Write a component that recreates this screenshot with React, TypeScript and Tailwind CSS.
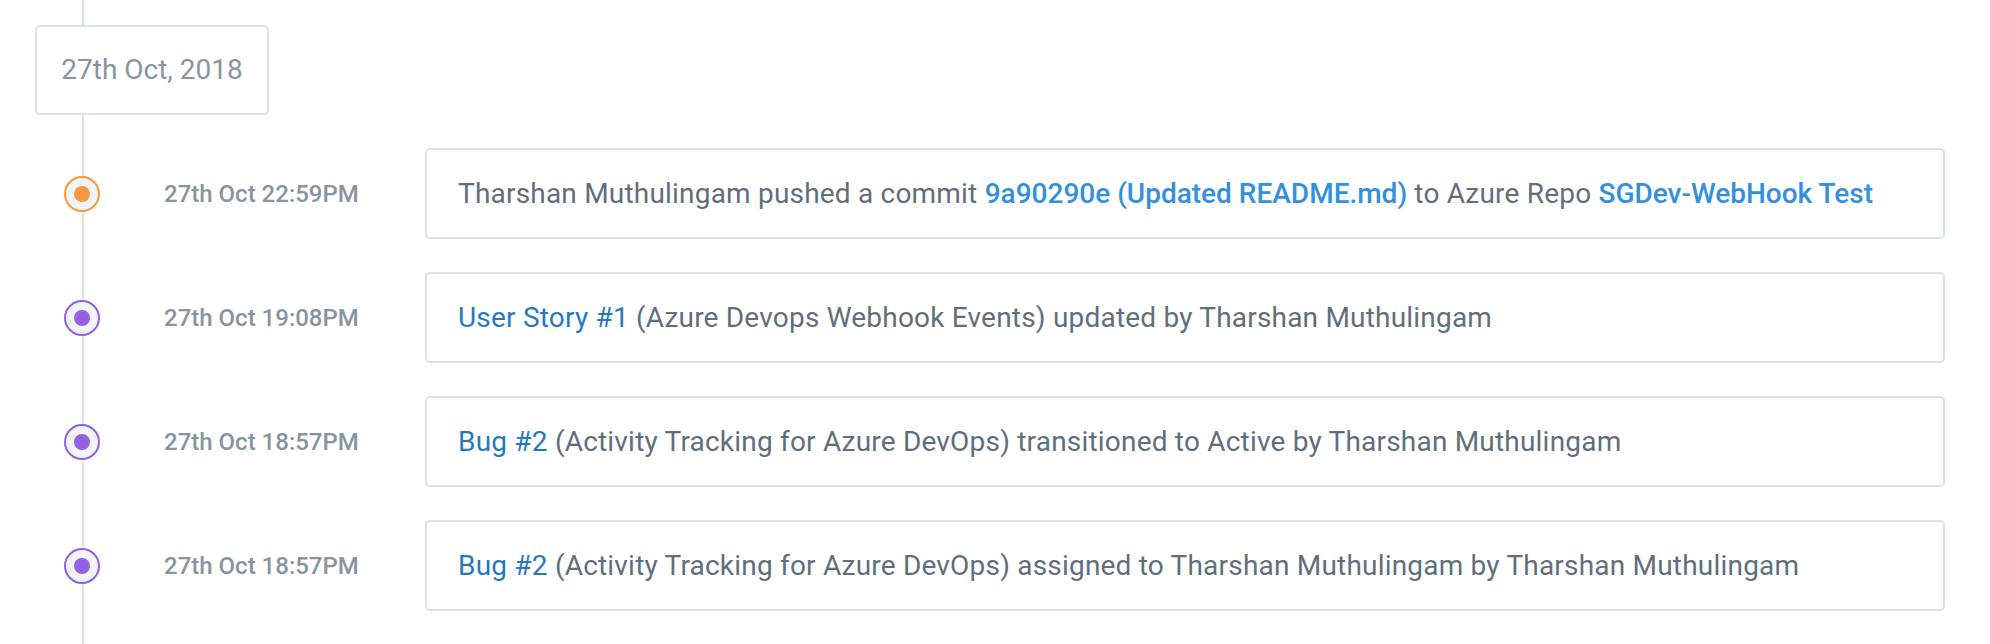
import React from "react";

type Part = { text: string; kind?: "link" | "strong" };

type Activity = {
  time: string;
  color: "orange" | "purple";
  parts: Part[];
};

const activities: Activity[] = [
  {
    time: "27th Oct 22:59PM",
    color: "orange",
    parts: [
      { text: "Tharshan Muthulingam pushed a commit " },
      { text: "9a90290e (Updated README.md)", kind: "strong" },
      { text: " to Azure Repo " },
      { text: "SGDev-WebHook Test", kind: "strong" },
    ],
  },
  {
    time: "27th Oct 19:08PM",
    color: "purple",
    parts: [
      { text: "User Story #1", kind: "link" },
      { text: " (Azure Devops Webhook Events) updated by Tharshan Muthulingam" },
    ],
  },
  {
    time: "27th Oct 18:57PM",
    color: "purple",
    parts: [
      { text: "Bug #2", kind: "link" },
      { text: " (Activity Tracking for Azure DevOps) transitioned to Active by Tharshan Muthulingam" },
    ],
  },
  {
    time: "27th Oct 18:57PM",
    color: "purple",
    parts: [
      { text: "Bug #2", kind: "link" },
      { text: " (Activity Tracking for Azure DevOps) assigned to Tharshan Muthulingam by Tharshan Muthulingam" },
    ],
  },
];

function Dot({ color }: { color: Activity["color"] }) {
  const ring = color === "orange" ? "border-[#f6993f]" : "border-[#9561e2]";
  const fill = color === "orange" ? "bg-[#f6993f]" : "bg-[#9561e2]";
  return (
    <div
      className={`relative z-10 flex h-[36px] w-[36px] shrink-0 items-center justify-center rounded-full border-2 bg-[#f1f5f8] ${ring}`}
    >
      <div className={`h-[16px] w-[16px] rounded-full ${fill}`} />
    </div>
  );
}

function ActivityRow({ activity }: { activity: Activity }) {
  return (
    <div className="mt-[33px] flex items-center">
      <div className="ml-[29px]">
        <Dot color={activity.color} />
      </div>
      <div className="w-[325px] shrink-0 pl-[64px] text-[24px] font-medium text-[#8795a1]">
        {activity.time}
      </div>
      <div className="flex h-[91px] flex-1 items-center rounded-[5px] border-2 border-[#dae1e7] bg-white px-[31px] text-[28px] text-[#606f7b]">
        <p className="whitespace-nowrap">
          {activity.parts.map((part, i) => {
            if (part.kind === "strong")
              return (
                <span key={i} className="font-medium text-[#3490dc]">
                  {part.text}
                </span>
              );
            if (part.kind === "link")
              return (
                <span key={i} className="tracking-[0.2px] text-[#2779bd]">
                  {part.text}
                </span>
              );
            return (
              <span key={i} className="tracking-[0.2px]">
                {part.text}
              </span>
            );
          })}
        </p>
      </div>
    </div>
  );
}

export default function App() {
  return (
    <div className="relative min-h-screen bg-white font-['Roboto','Liberation_Sans',sans-serif]">
      <div className="absolute bottom-0 left-[82px] top-0 w-[2px] bg-[#dae1e7]" />
      <div className="relative pl-[35px] pr-[45px] pt-[25px]">
        <div className="flex h-[90px] w-[234px] items-center justify-center rounded-[5px] border-2 border-[#dae1e7] bg-white text-[28px] text-[#8795a1]">
          27th Oct, 2018
        </div>
        {activities.map((a, i) => (
          <ActivityRow key={i} activity={a} />
        ))}
      </div>
    </div>
  );
}
